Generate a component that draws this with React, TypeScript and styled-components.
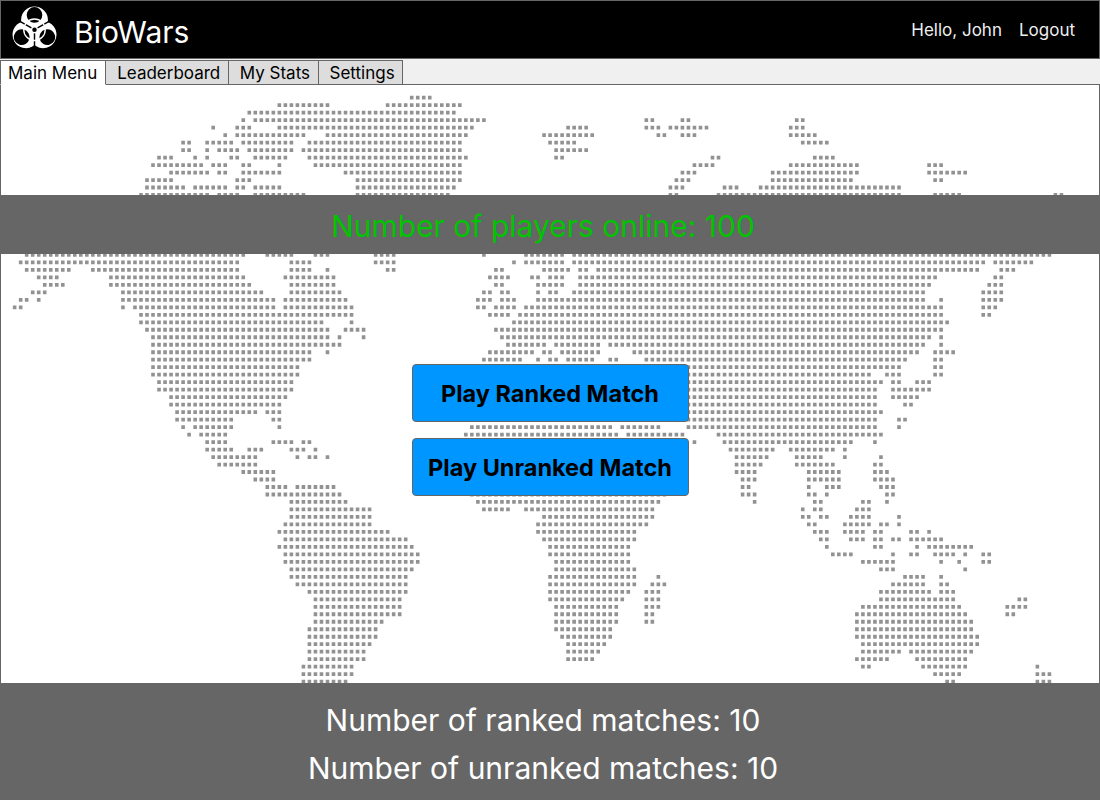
import React from "react";
import styled, { createGlobalStyle } from "styled-components";

const GlobalStyle = createGlobalStyle`
  html, body {
    margin: 0;
    padding: 0;
    background: #ffffff;
    font-family: "Inter", "Liberation Sans", sans-serif;
  }
`;

// dot map, one string per grid row, "from-to" column runs
const MAP_ROWS = [
  "66-69",
  "44-52 62-74",
  "39-73",
  "38 40-78 105-106 111-112 130-131",
  "33 37-39 44-76 92-95 105-107 109-115 129-131",
  "35 37-48 52-75 88-96 107-108 111-113 129-133",
  "28-29 32-36 38-46 49-74 89-93 131-135",
  "28-29 32 34-37 39-46 48-74 90-95",
  "24-26 30 32 36-37 40-45 49-75 90-91 116-117 133-136",
  "23-31 33-35 38-39 44 50-74 113-116 129-140 152-154",
  "26-32 34-35 38-44 55-74 111-113 126-140 152-158",
  "22-26 37-39 57-74 110-112 126-139 153-154",
  "22-28 30-35 37-38 40-44 57-73 109-111 118-120 124-147",
  "21-32 34-37 40-48 57-72 109-110 117-147 153-157 173-174",
  "",
  "",
  "",
  "",
  "",
  "",
  "",
  "2-38 42-46 50-52 60-63 78 85-91 93-172",
  "1-37 46-49 60-63 83 85-91 93-161 163-169",
  "2-9 13-37 46-49 52 62-63 80-81 88-92 94-95 97-160 164-166",
  "4-7 16-38 45-53 79-82 86-87 89-91 94-153 163-164",
  "5-8 16-39 46-53 80-81 87-91 94-152 162-164",
  "3-5 18-41 46-54 78-79 81-82 87 89-90 93-151 161-164",
  "1-2 4 18-43 45-55 77-79 81-83 87-151 154 161-164",
  "0-1 18 20-43 45-56 77-78 80-83 85-154 161-163",
  "21-56 79-82 84-154 161-162",
  "21-51 56 83-155",
  "22-52 55-58 80-154",
  "23-52 54 58 81-152 154",
  "23-54 82-88 90-97 99-151 154",
  "23-49 52 79-86 88-89 91-97 103-150 153-156",
  "23-49 78-84 87 89-90 92-96 99-100 105-148 153-154",
  "23-47 108-147 153-154",
  "23-47 108-142 145-147 153-154",
  "24-46 108-144 146-147 150-152",
  "24-46 108-143 146-152",
  "26-45 108-143 146-150",
  "26-44 108-143 148-149",
  "27-40 42-44 108-144",
  "27-36 43-44 108-143 147-148",
  "28 30-36 44 76-99 101-107 112-143 147",
  "29 31-35 75-100 102-111 117-144",
  "32-35 43-46 48-49 113 118-139 143",
  "32-36 39-41 46-48 50 119-126 129-136 138",
  "33-40 47 49-50 52 120-125 130-134 138 144",
  "34-40 120-124 130-136 143-144",
  "38-43 120-123 132-137 143-145",
  "40-43 121-123 132-137 143-146",
  "42-45 47-53 121-122 132 135-137 144-146",
  "42-54 76-108 121-123 132-133 135 145-146",
  "46-55 77-107 123 133-134 141-142 145",
  "46-59 78-82 85-106 131 133-134 140-142",
  "46-59 88-106 131-132 134-135 139-142 147",
  "45-59 87-105 132-133 138-142 144-145 147",
  "44-62 87-103 133-135 138-141 143-144 149-150 152",
  "45-65 88-103 134-135 139-141 143-144 146-147 149-154",
  "44-66 89-102 135 143-144 150 152-159",
  "45-67 89-102 136-139 146 149-150 153-156 158 161-162",
  "45-67 90-102 141-146 154 157 161-162",
  "46-66 90-103 144-146 158",
  "46-65 89-103 107 148-151 154",
  "47-65 89-103 106-108 146-151 154-155",
  "49-65 89-102 105-107 144-152 154-156",
  "50-64 89-101 105-107 144-156 167-168",
  "50-64 90-100 105-107 141-157 165-168",
  "50-64 90-100 105-106 140-158 165-166",
  "50-61 90-100 105-106 140-159",
  "49-60 90-99 140-159",
  "49-60 91-99 140-160",
  "49-59 92-98 141-160",
  "49-58 92-97 141-147 149-159",
  "49-58 92-96 140-145 150-158",
  "48-56 141-142 151-158 170",
  "48-56 153-157 170-172",
  "48-55 155-156 170-172",
];

// grid pitch and origin, in panel coordinates
const COL_STEP = 6.016;
const ROW_STEP = 7.487;
const ORIGIN_X = 13.65;
const ORIGIN_Y = 12.67;
const DOT_W = 3.6;
const DOT_H = 3.8;

const buildMapPath = () => {
  let d = "";
  MAP_ROWS.forEach((row, r) => {
    if (!row) return;
    row.split(" ").forEach((run) => {
      const [from, to] = run.split("-").map(Number);
      for (let c = from; c <= (to ?? from); c++) {
        const x = ORIGIN_X + c * COL_STEP - DOT_W / 2;
        const y = ORIGIN_Y + r * ROW_STEP - DOT_H / 2;
        d += `M${x.toFixed(2)} ${y.toFixed(2)}h${DOT_W}v${DOT_H}h-${DOT_W}z`;
      }
    });
  });
  return d;
};

const mapPath = buildMapPath();

const Page = styled.div`
  width: 1100px;
  height: 800px;
  display: flex;
  flex-direction: column;
  overflow: hidden;
  color: #000000;
`;

const Header = styled.header`
  height: 59px;
  box-sizing: border-box;
  background: #000000;
  border: 1px solid #666666;
  display: flex;
  align-items: center;
  justify-content: space-between;
  padding: 0 24px 0 11px;
  color: #ffffff;
`;

const Brand = styled.div`
  display: flex;
  align-items: center;
  gap: 17px;
`;

const LogoMark = styled.svg`
  width: 45px;
  height: 43px;
  margin-bottom: 4px;
`;

const Title = styled.h1`
  margin: 4px 0 0;
  font-size: 30px;
  font-weight: 400;
`;

const UserArea = styled.div`
  display: flex;
  gap: 17px;
  font-size: 17px;
  color: #eeeeee;
`;

const TabBar = styled.nav`
  height: 26px;
  box-sizing: border-box;
  background: #f0f0f0;
  display: flex;
  align-items: flex-end;
  padding-top: 1px;
  margin-bottom: -1px;
  position: relative;
`;

const Tab = styled.div<{ active?: boolean }>`
  height: 25px;
  box-sizing: border-box;
  display: flex;
  align-items: center;
  font-size: 17px;
  padding: 1px ${({ active }) => (active ? "8px 0 7px" : "7.5px 0 11px")};
  background: ${({ active }) => (active ? "#ffffff" : "#dddddd")};
  border: 1px solid #666666;
  border-left-width: ${({ active }) => (active ? "1px" : "0")};
  border-bottom-color: ${({ active }) => (active ? "#ffffff" : "#666666")};
  position: relative;
  z-index: 1;
`;

const MapPanel = styled.main`
  flex: 1;
  position: relative;
  background: #ffffff;
  border: 1px solid #666666;
  border-bottom: none;
  display: flex;
  flex-direction: column;
  align-items: center;
  overflow: hidden;
`;

const MapDots = styled.svg`
  position: absolute;
  top: 0;
  left: 0;
  filter: blur(0.5px);
`;

const PlayersBand = styled.div`
  position: relative;
  margin: 110px -1px 0;
  align-self: stretch;
  height: 59px;
  box-sizing: border-box;
  background: #666666;
  color: #00c400;
  font-size: 30px;
  display: flex;
  align-items: center;
  justify-content: center;
  padding: 2px 14px 0 0;
`;

const ButtonStack = styled.div`
  position: relative;
  margin-top: 110px;
  display: flex;
  flex-direction: column;
  gap: 16px;
`;

const PlayButton = styled.button`
  width: 277px;
  height: 58px;
  box-sizing: border-box;
  background: #0096ff;
  border: 1px solid #666666;
  border-radius: 4px;
  color: #000000;
  font-family: inherit;
  font-size: 23.5px;
  font-weight: 700;
  padding: 0;
`;

const Footer = styled.footer`
  height: 117px;
  box-sizing: border-box;
  background: #666666;
  color: #ffffff;
  font-size: 30px;
  display: flex;
  flex-direction: column;
  align-items: center;
  justify-content: center;
  gap: 12px;
  padding: 4px 14px 0 0;
`;

const Logo: React.FC = () => (
  <LogoMark viewBox="-50 -53 100 96">
    <mask id="bio-cut">
      <rect x="-60" y="-60" width="120" height="120" fill="#fff" />
      <g fill="#000">
        {[0, 120, 240].map((a) => (
          <g key={a} transform={`rotate(${a})`}>
            <circle cx="0" cy="-33" r="17.5" />
            <rect x="-1.6" y="8" width="3.2" height="34" />
          </g>
        ))}
        <circle cx="0" cy="0" r="5" />
      </g>
    </mask>
    <g fill="#fff" mask="url(#bio-cut)">
      {[0, 120, 240].map((a) => (
        <circle key={a} cx="0" cy="-22" r="30" transform={`rotate(${a})`} />
      ))}
    </g>
    <circle cx="0" cy="0" r="24" fill="none" stroke="#fff" strokeWidth="3" />
  </LogoMark>
);

const App: React.FC = () => {
  return (
    <Page>
      <GlobalStyle />
      <Header>
        <Brand>
          <Logo />
          <Title>BioWars</Title>
        </Brand>
        <UserArea>
          <span>Hello, John</span>
          <span>Logout</span>
        </UserArea>
      </Header>
      <TabBar>
        <Tab active>Main Menu</Tab>
        <Tab>Leaderboard</Tab>
        <Tab>My Stats</Tab>
        <Tab>Settings</Tab>
      </TabBar>
      <MapPanel>
        <MapDots width="1098" height="598" viewBox="0 0 1098 598">
          <path d={mapPath} fill="#929292" />
        </MapDots>
        <PlayersBand>Number of players online: 100</PlayersBand>
        <ButtonStack>
          <PlayButton>Play Ranked Match</PlayButton>
          <PlayButton>Play Unranked Match</PlayButton>
        </ButtonStack>
      </MapPanel>
      <Footer>
        <div>Number of ranked matches: 10</div>
        <div>Number of unranked matches: 10</div>
      </Footer>
    </Page>
  );
};

export default App;
